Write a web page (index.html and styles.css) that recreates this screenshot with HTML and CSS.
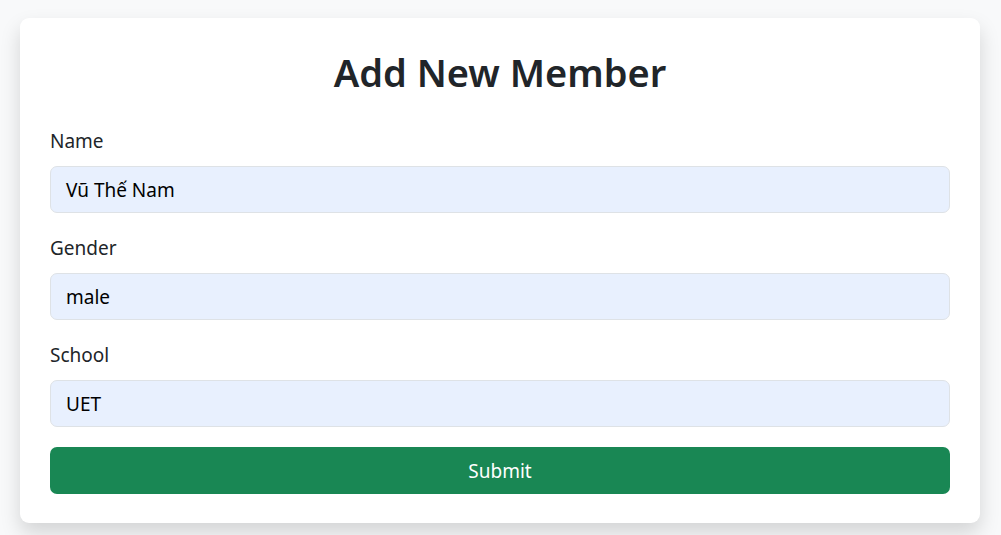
FILE: index.html
```html
<!DOCTYPE html>
<html lang="vi">
<head>
<meta charset="utf-8">
<title>Add New Member</title>
<link rel="stylesheet" href="styles.css">
</head>
<body>
  <div class="page">
    <form class="card">
      <h1 class="title">Add New Member</h1>
      <div class="group">
        <label class="label">Name</label>
        <div class="input">Vũ Thế Nam</div>
      </div>
      <div class="group">
        <label class="label">Gender</label>
        <div class="input">male</div>
      </div>
      <div class="group">
        <label class="label">School</label>
        <div class="input">UET</div>
      </div>
      <button type="button" class="submit">Submit</button>
    </form>
  </div>
</body>
</html>
```

FILE: styles.css
```css
* { box-sizing: border-box; }
html, body { margin: 0; padding: 0; }
body {
  background: #f8f9fa;
  font-family: "Noto Sans", "Open Sans", sans-serif;
  color: #212529;
}
.page {
  padding: 18px 21px 12px 20px;
}
.card {
  background: #fff;
  border-radius: 9px;
  box-shadow: 0 10px 20px rgba(0, 0, 0, 0.15);
  padding: 30px 30px 29px;
  display: flex;
  flex-direction: column;
}
.title {
  margin: 0 0 30px;
  font-size: 38px;
  line-height: 48px;
  font-weight: 600;
  text-align: center;
}
.group {
  display: flex;
  flex-direction: column;
  margin-bottom: 20px;
}
.label {
  font-size: 19px;
  line-height: 29px;
  padding-top: 1px;
  margin-bottom: 10px;
}
.input {
  height: 47px;
  background: #e8f0fe;
  border: 1px solid #dee2e6;
  border-radius: 7px;
  padding: 0 15px;
  font-size: 19px;
  display: flex;
  align-items: center;
  color: #000;
}
.submit {
  height: 47px;
  background: #198754;
  border: 0;
  border-radius: 7px;
  color: #fff;
  font-family: inherit;
  font-size: 19px;
}
```
